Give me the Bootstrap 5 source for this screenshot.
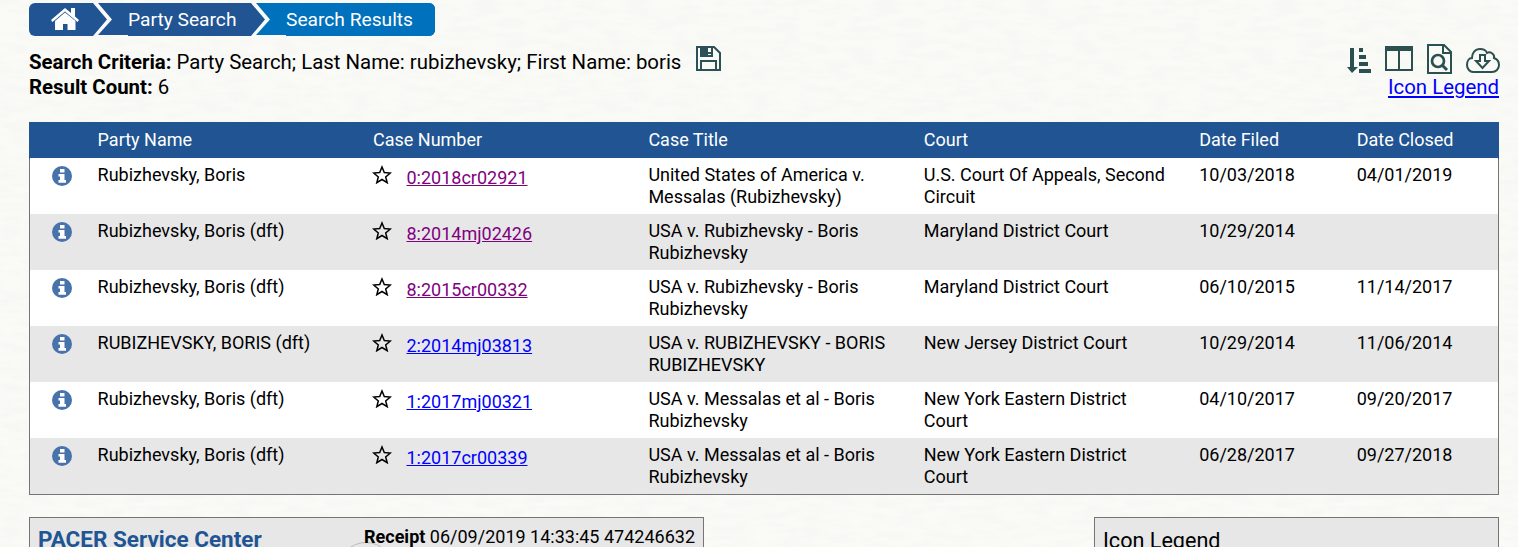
<!DOCTYPE html>
<html lang="en">
<head>
<meta charset="utf-8">
<title>Search Results</title>
<link rel="stylesheet" href="https://cdn.jsdelivr.net/npm/bootstrap@5.3.0/dist/css/bootstrap.min.css">
<style>
html{overflow:hidden}
body{height:547px;overflow:hidden;font-family:Roboto,sans-serif;font-size:20.4px;line-height:25px;color:#000;padding:3px 19px 0 29px;
background:#fafaf7 url("data:image/svg+xml,%3Csvg xmlns='http://www.w3.org/2000/svg' width='400' height='300'%3E%3Cfilter id='n' x='0' y='0' width='1' height='1'%3E%3CfeTurbulence type='fractalNoise' baseFrequency='.04 .15' numOctaves='3' seed='4' stitchTiles='stitch'/%3E%3CfeColorMatrix values='0 0 0 0 .72 0 0 0 0 .72 0 0 0 0 .68 .25 0 0 0 -.09'/%3E%3C/filter%3E%3Crect width='400' height='300' filter='url(%23n)'/%3E%3C/svg%3E")}
svg{display:block;flex:none}
a,a:hover{color:#00f}
a.visited-case{color:#800080}
.crumbs{width:406px;height:33px;border-radius:6px;overflow:hidden;background:#205493;color:#fff;font-size:19.200px;line-height:33px}
.crumb-home{width:64px;padding-left:22px}
.crumb-home svg{margin-top:5px}
.crumb-party{width:158px;padding-left:35px}
.crumb-current{width:184px;padding-left:35px;background:#0071bc}
.crumb-step{position:relative}
.crumb-step>span{position:relative}
.chevron{position:absolute;left:0;top:0}
.criteria{height:70px;margin-top:11px;padding-top:3px}
.criteria-line svg{margin:-4px 0 0 15px}
.tools .icon-row{height:30px;margin:-6px -1px 0 0}
.legend-link{line-height:25px;margin-top:1px}
.results{border:1px solid #757575;margin-top:5px;height:373px}
.results .table{--bs-table-bg:transparent;--bs-table-color:#000;color:#000;font-size:18px;line-height:22px;table-layout:fixed;margin:0}
.results td,.results th{border:0;padding:6px 20px 6px 7.600px;vertical-align:top;font-weight:400}
.results thead th{background:#205493;color:#fff;height:35px;padding:6px 8px 7px 7.600px;box-shadow:none}
.results tbody{position:relative}
.results tbody td{height:56px;background:#fff}
.results tbody tr:nth-child(even) td{background:#e7e7e7}
.results thead{outline:1px solid #205493}
.results .table .pick{padding:8px 0 0 22px}
.results .table .case-no{padding-top:9px}
.case-no svg{margin:-2px 14.500px 0 -1px}
.panel{border:1px solid #757575;background:#e7e7e7;height:80px}
.footer-row{margin-top:22px}
.service{width:675px;padding:7px 8px 0 8px}
.service-name{font-size:22.500px;font-weight:700;color:#205493;line-height:28px}
.receipt{font-size:18px;line-height:24px}
.seal{position:absolute;left:308px;top:24px;width:56px;height:56px;border:1px solid #bbb;border-radius:50%}
.legend{width:405px;padding:10px 8px;font-size:21.600px}
</style>
</head>
<body>
<nav class="crumbs d-flex">
  <div class="crumb-home"><svg width="28" height="22" viewBox="0 0 28 22" fill="#fff"><path d="M14 0 0 12l1.500 2L14 3.400 26.500 14l1.500-2-4-3.500V0h-4v5z"/><path d="M14 4.500 4 13v9h8v-6h4.500v6h8v-9z"/></svg></div>
  <div class="crumb-step crumb-party"><svg class="chevron" width="35" height="33" viewBox="0 0 35 33"><path d="M0 0h5l14 16.500L5 32H35v1H0l14-16.500z" fill="#fafaf7"/></svg><span>Party Search</span></div>
  <div class="crumb-step crumb-current"><svg class="chevron" width="35" height="33" viewBox="0 0 35 33"><path d="M0 0v33l14-16.500z" fill="#205493"/><path d="M0 0h5l14 16.500L5 32H35v1H0l14-16.500z" fill="#fafaf7"/></svg><span>Search Results</span></div>
</nav>
<header class="d-flex justify-content-between criteria">
  <div>
    <div class="d-flex criteria-line"><div><b>Search Criteria:</b> Party Search; Last Name: rubizhevsky; First Name: boris</div>
      <svg width="25" height="25" viewBox="0 0 25 25" fill="none" stroke="#2b5058" stroke-width="2"><path d="M1 1h17l6 6v17H1zM5 24v-9h15v9M16 1v9H5V1"/><path d="M6 2h5v7H6zM10 7h5" fill="#2b5058"/></svg></div>
    <div><b>Result Count:</b> 6</div>
  </div>
  <div class="tools">
    <div class="d-flex icon-row justify-content-end">
      <svg width="154" height="30" viewBox="0 0 154 30" fill="none" stroke="#2b5050" stroke-width="2"><g fill="#2b5050" stroke="none"><path d="M4 4h4v19h4l-6 6-5-6h3zM13 4h4v4h-4zM13 11h7v4h-7zM13 18h9v4h-9zM13 25h12v4H13z"/></g><path d="M40 3h26v23H40zM53 4v22"/><path d="M40 2h26l1 1v4H39V3z" fill="#2b5050" stroke="none"/><path d="M82 1h16l7 7v21H82zM97 1v8h8"/><circle cx="92" cy="17" r="6" stroke-width="2.700"/><path d="m96.500 21.500 4.500 4.500" stroke-width="3"/><path d="M127 28h19c4 0 7-3 7-7 0-3-2-6-5-7 1-4-4-7-7-5-1-3-4-4-7-4-5 0-8 4-8 9-3 0-5 3-5 7s3 7 6 7z" stroke-width="2"/><path d="M134 11h5v6h4l-6.500 7-6.500-7h4z" stroke-width="2"/></svg>
    </div>
    <div class="legend-link text-end"><a href="#">Icon Legend</a></div>
  </div>
</header>
<main class="results">
<table class="table">
<colgroup><col style="width:60px"><col style="width:275.400px"><col style="width:275.400px"><col style="width:275.400px"><col style="width:275.400px"><col style="width:157.500px"><col></colgroup>
<thead><tr><th></th><th>Party Name</th><th>Case Number</th><th>Case Title</th><th>Court</th><th>Date Filed</th><th>Date Closed</th></tr></thead>
<tbody id="rows"></tbody>
</table>
</main>
<footer class="footer-row d-flex justify-content-between">
  <section class="panel service position-relative d-flex justify-content-between"><div class="seal"></div><div class="service-name">PACER Service Center</div><div class="receipt position-relative"><b>Receipt</b> 06/09/2019 14:33:45 474246632</div></section>
  <section class="panel legend">Icon Legend</section>
</footer>
<script>
const info='<svg width="20" height="20" viewBox="0 0 20 20"><circle cx="10" cy="10" r="10" fill="#4773aa"/><path d="M8 3h4.500v3.500H8zM6.500 8h6v6H14v2.800H6.500V14H8v-3.500H6.500z" fill="#fff"/></svg>';
const star='<svg width="20" height="19" viewBox="0 0 20 19"><path d="m10 2 2.300 5.500 6 .5-4.600 3.900 1.500 5.800L10 14.500l-5.200 3.200 1.500-5.800L1.700 8l6-.5z" fill="none" stroke="#000" stroke-width="1.500"/></svg>';
const data=[
['Rubizhevsky, Boris','0:2018cr02921','United States of America v. Messalas (Rubizhevsky)','U.S. Court Of Appeals, Second Circuit','10/03/2018','04/01/2019'],
['Rubizhevsky, Boris (dft)','8:2014mj02426','USA v. Rubizhevsky - Boris Rubizhevsky','Maryland District Court','10/29/2014',''],
['Rubizhevsky, Boris (dft)','8:2015cr00332','USA v. Rubizhevsky - Boris Rubizhevsky','Maryland District Court','06/10/2015','11/14/2017'],
['RUBIZHEVSKY, BORIS (dft)','2:2014mj03813','USA v. RUBIZHEVSKY - BORIS RUBIZHEVSKY','New Jersey District Court','10/29/2014','11/06/2014'],
['Rubizhevsky, Boris (dft)','1:2017mj00321','USA v. Messalas et al - Boris Rubizhevsky','New York Eastern District Court','04/10/2017','09/20/2017'],
['Rubizhevsky, Boris (dft)','1:2017cr00339','USA v. Messalas et al - Boris Rubizhevsky','New York Eastern District Court','06/28/2017','09/27/2018']];
document.getElementById('rows').innerHTML=data.map((r,i)=>`<tr><td class="pick">${info}</td><td>${r[0]}</td><td class="case-no"><div class="d-flex">${star}<a href="#"${i<3?' class="visited-case"':''}>${r[1]}</a></div></td>${r.slice(2).map(t=>`<td>${t}</td>`).join('')}</tr>`).join('');
</script>
<script src="https://cdn.jsdelivr.net/npm/bootstrap@5.3.0/dist/js/bootstrap.bundle.min.js"></script>
</body>
</html>
